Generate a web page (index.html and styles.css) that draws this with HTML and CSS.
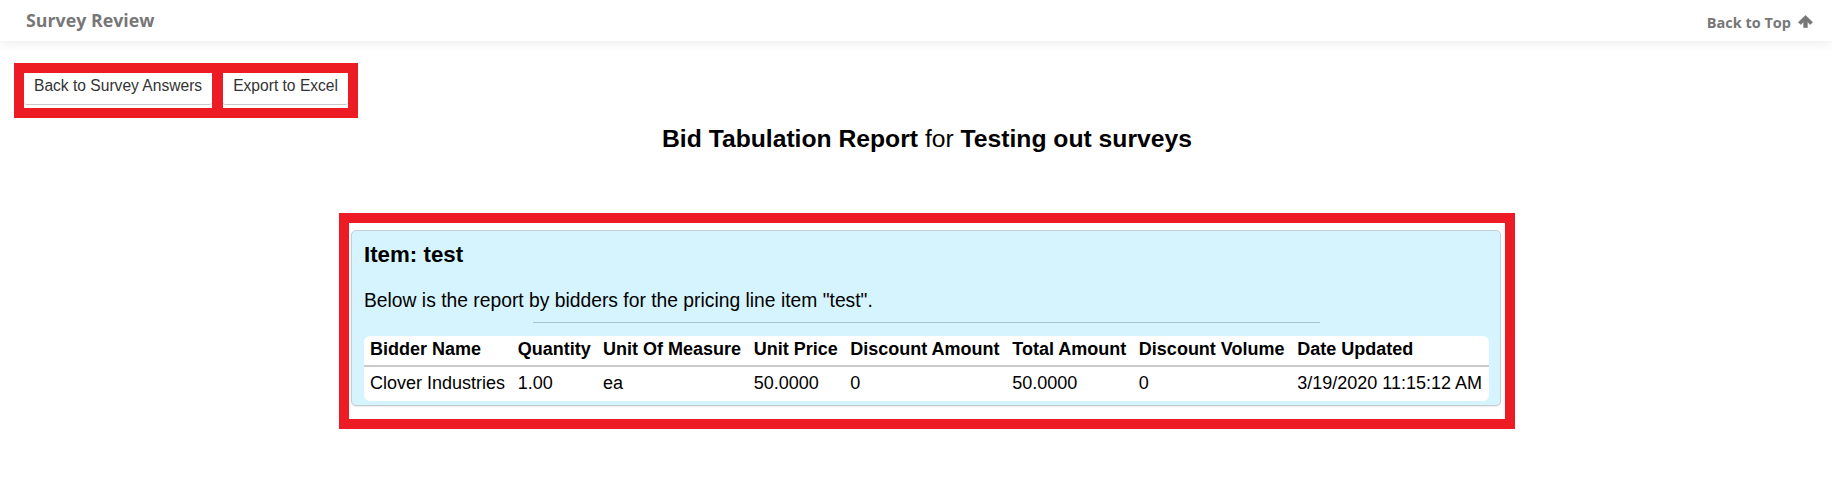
FILE: index.html
```html
<!DOCTYPE html>
<html lang="en">
<head>
<meta charset="utf-8">
<title>Survey Review</title>
<link rel="stylesheet" href="styles.css">
</head>
<body>
<header class="topbar">
  <div class="brand">Survey Review</div>
  <a class="top-link" href="#">Back to Top
    <svg class="top-icon" viewBox="0 0 14 12" width="15" height="13" aria-hidden="true"><path d="M7 0.3 L13.6 6.6 L11.4 8.8 L8.7 6.2 V11.7 H5.3 V6.2 L2.6 8.8 L0.4 6.6 Z" fill="#777" stroke="#777" stroke-width="0.6" stroke-linejoin="round"/></svg>
  </a>
</header>

<div class="toolbar">
  <div class="mark-btn"><a class="btn" href="#">Back to Survey Answers</a></div>
  <div class="mark-btn"><a class="btn" href="#">Export to Excel</a></div>
</div>

<main class="content">
  <h2 class="report-title"><b>Bid Tabulation Report</b> for <b>Testing out surveys</b></h2>

  <div class="mark-panel">
    <section class="panel">
      <h4 class="item-title">Item: test</h4>
      <p class="item-desc">Below is the report by bidders for the pricing line item "test".</p>
      <hr class="divider">
      <table class="bids">
        <thead>
          <tr>
            <th>Bidder Name</th>
            <th>Quantity</th>
            <th>Unit Of Measure</th>
            <th>Unit Price</th>
            <th>Discount Amount</th>
            <th>Total Amount</th>
            <th>Discount Volume</th>
            <th>Date Updated</th>
          </tr>
        </thead>
        <tbody>
          <tr>
            <td>Clover Industries</td>
            <td>1.00</td>
            <td>ea</td>
            <td>50.0000</td>
            <td>0</td>
            <td>50.0000</td>
            <td>0</td>
            <td>3/19/2020 11:15:12 AM</td>
          </tr>
        </tbody>
      </table>
    </section>
  </div>
</main>
</body>
</html>
```

FILE: styles.css
```css
html, body {
  margin: 0;
  padding: 0;
  background: #fff;
}

body {
  font-family: "Liberation Sans", Arial, sans-serif;
  color: #000;
}

.topbar {
  position: relative;
  z-index: 2;
  height: 41px;
  display: flex;
  align-items: center;
  justify-content: space-between;
  padding: 0 19px 0 26px;
  background: #fff;
  box-shadow: 0 3px 10px rgba(0, 0, 0, 0.07);
  font-family: "Open Sans", sans-serif;
  font-weight: 700;
  color: #777;
}

.brand {
  font-size: 17.8px;
  line-height: 24px;
  margin-top: -1px;
}

.top-link {
  display: flex;
  align-items: center;
  gap: 7px;
  font-size: 14.5px;
  color: #777;
  text-decoration: none;
  margin-top: 3px;
}

.top-icon {
  display: block;
  margin-top: -1px;
}

.toolbar {
  display: flex;
  gap: 11px;
  padding: 32px 0 0 24px;
}

.mark-btn {
  outline: 10px solid #ed1c24;
  background: #fff;
  padding-bottom: 3px;
}

.btn {
  display: block;
  padding: 3px 10px 8px;
  font-size: 15.6px;
  line-height: 20px;
  color: #333;
  text-decoration: none;
  border-bottom: 1px solid #c9c9c9;
  border-radius: 0 0 3px 3px;
}

.content {
  padding-left: 22px;
}

.report-title {
  margin: 17px 0 0;
  font-size: 24.7px;
  line-height: 27px;
  font-weight: 400;
  text-align: center;
}

.report-title b {
  font-weight: 700;
}

.mark-panel {
  width: 1150px;
  margin: 61px auto 0;
  border: 10px solid #ed1c24;
  padding: 7px 4px 13px 2px;
  background: #fff;
}

.panel {
  background: #d5f4fd;
  border: 1px solid #c3cdd1;
  border-radius: 5px;
  padding: 12px 11px 4px 12px;
  box-shadow: 0 1px 1px rgba(0, 0, 0, 0.08);
}

.item-title {
  margin: 0 0 19px;
  font-size: 22.3px;
  line-height: 24.5px;
  font-weight: 700;
}

.item-desc {
  margin: 0;
  font-size: 19.3px;
  line-height: 27.4px;
}

.divider {
  width: 70%;
  margin: 8px auto 13px;
  border: 0;
  border-top: 1px solid #a9c3cd;
  height: 0;
}

.bids {
  width: 100%;
  border-collapse: separate;
  border-spacing: 0;
  background: #fff;
  border-radius: 6px;
  font-size: 18px;
  line-height: 21px;
}

.bids th {
  text-align: left;
  font-weight: 700;
  padding: 3px 6px 5px;
  border-bottom: 2px solid #cbcbcb;
  white-space: nowrap;
}

.bids td {
  padding: 6px 6px 7px;
  white-space: nowrap;
}
```
